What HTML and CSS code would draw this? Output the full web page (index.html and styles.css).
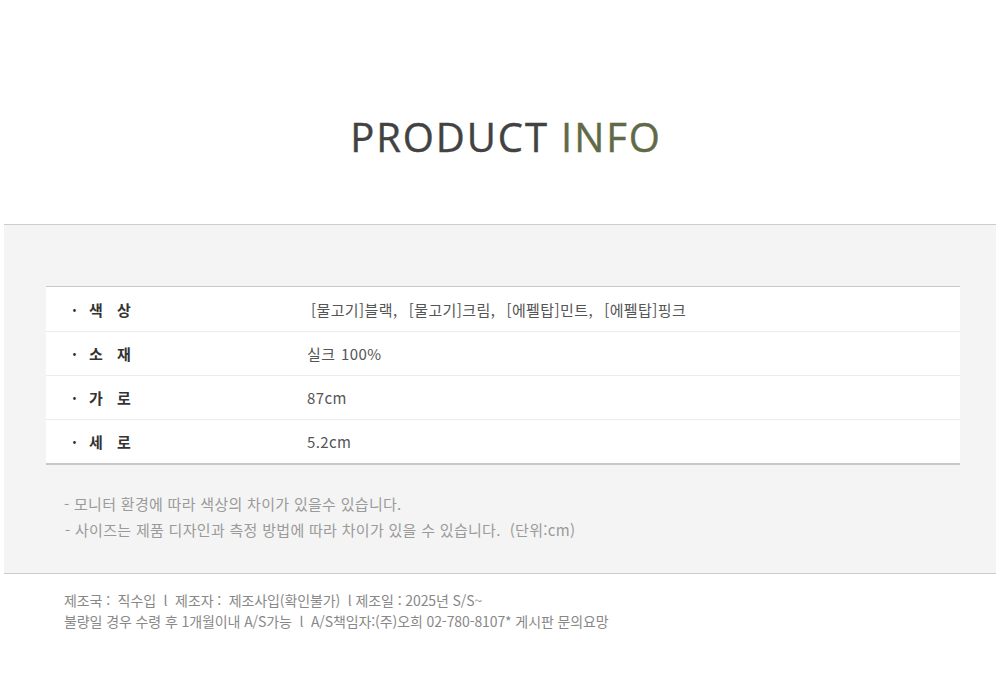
FILE: index.html
```html
<!DOCTYPE html>
<html lang="ko">
<head>
<meta charset="utf-8">
<link rel="stylesheet" href="styles.css">
</head>
<body>
<div class="page">
  <header class="head">
    <h1 class="title">PRODUCT <span class="accent">INFO</span></h1>
  </header>
  <section class="panel">
    <div class="table">
      <div class="row">
        <div class="label"><span class="dot">·</span><span class="lt">색</span><span class="lt">상</span></div>
        <div class="value first">[물고기]블랙,&nbsp; [물고기]크림,&nbsp; [에펠탑]민트,&nbsp; [에펠탑]핑크</div>
      </div>
      <div class="row">
        <div class="label"><span class="dot">·</span><span class="lt">소</span><span class="lt">재</span></div>
        <div class="value">실크 100%</div>
      </div>
      <div class="row">
        <div class="label"><span class="dot">·</span><span class="lt">가</span><span class="lt">로</span></div>
        <div class="value">87cm</div>
      </div>
      <div class="row">
        <div class="label"><span class="dot">·</span><span class="lt">세</span><span class="lt">로</span></div>
        <div class="value">5.2cm</div>
      </div>
    </div>
    <div class="notes">
      <p class="note">- 모니터 환경에 따라 색상의 차이가 있을수 있습니다.</p>
      <p class="note n2">- 사이즈는 제품 디자인과 측정 방법에 따라 차이가 있을 수 있습니다.&nbsp; (단위:cm)</p>
    </div>
  </section>
  <footer class="foot">
    <p>제조국 :&nbsp; 직수입&nbsp; l&nbsp; 제조자 :&nbsp; 제조사입(확인불가)&nbsp; l 제조일 : 2025년 S/S~</p>
    <p>불량일 경우 수령 후 1개월이내 A/S가능&nbsp; l&nbsp; A/S책임자:(주)오희 02-780-8107* 게시판 문의요망</p>
  </footer>
</div>
</body>
</html>
```

FILE: styles.css
```css
* { box-sizing: border-box; }
html, body { margin: 0; padding: 0; background: #fff; }
body {
  font-family: "Noto Sans CJK KR", "Noto Sans", sans-serif;
  width: 1000px;
  height: 696px;
  overflow: hidden;
}
.page { padding: 0 4px; }
.head {
  height: 224px;
  display: flex;
  align-items: flex-start;
  justify-content: center;
  padding-top: 112px;
}
.title {
  margin: 0 0 0 12px;
  font-family: "Open Sans", "Noto Sans", sans-serif;
  font-weight: 400;
  font-size: 40px;
  line-height: 50px;
  letter-spacing: 1.9px;
  color: #424242;
  -webkit-text-stroke: 0.4px currentColor;
}
.accent { color: #616a46; }
.panel {
  background: #f4f4f4;
  border-top: 1px solid #cccccc;
  border-bottom: 1px solid #cccccc;
  padding: 61px 36px 0 42px;
  height: 350px;
}
.table {
  background: #fff;
  border-top: 1px solid #c8c8c8;
  border-bottom: 2px solid #c8c8c8;
}
.row {
  display: flex;
  align-items: center;
  height: 44px;
  border-top: 1px solid #ececec;
}
.row:first-child { border-top: none; height: 44px; }
.label {
  width: 261px;
  display: flex;
  align-items: center;
  padding-left: 26px;
  font-size: 15px;
  font-weight: 700;
  color: #333;
}
.dot { width: 17px; font-weight: 700; }
.lt { width: 28px; }
.value {
  font-size: 15px;
  color: #555;
  letter-spacing: 0.4px;
  word-spacing: 1px;
}
.value.first { padding-left: 4px; letter-spacing: 0.4px; word-spacing: 1px; }
.notes { padding: 26px 0 0 18px; }
.note {
  margin: 0;
  font-size: 15px;
  line-height: 26px;
  color: #9a9a9a;
  letter-spacing: 0.3px;
}
.note.n2 { padding-left: 1px; }
.foot {
  padding: 16px 0 0 60px;
}
.foot p {
  margin: 0;
  font-size: 14px;
  line-height: 21px;
  color: #888;
  letter-spacing: -0.1px;
}
```
